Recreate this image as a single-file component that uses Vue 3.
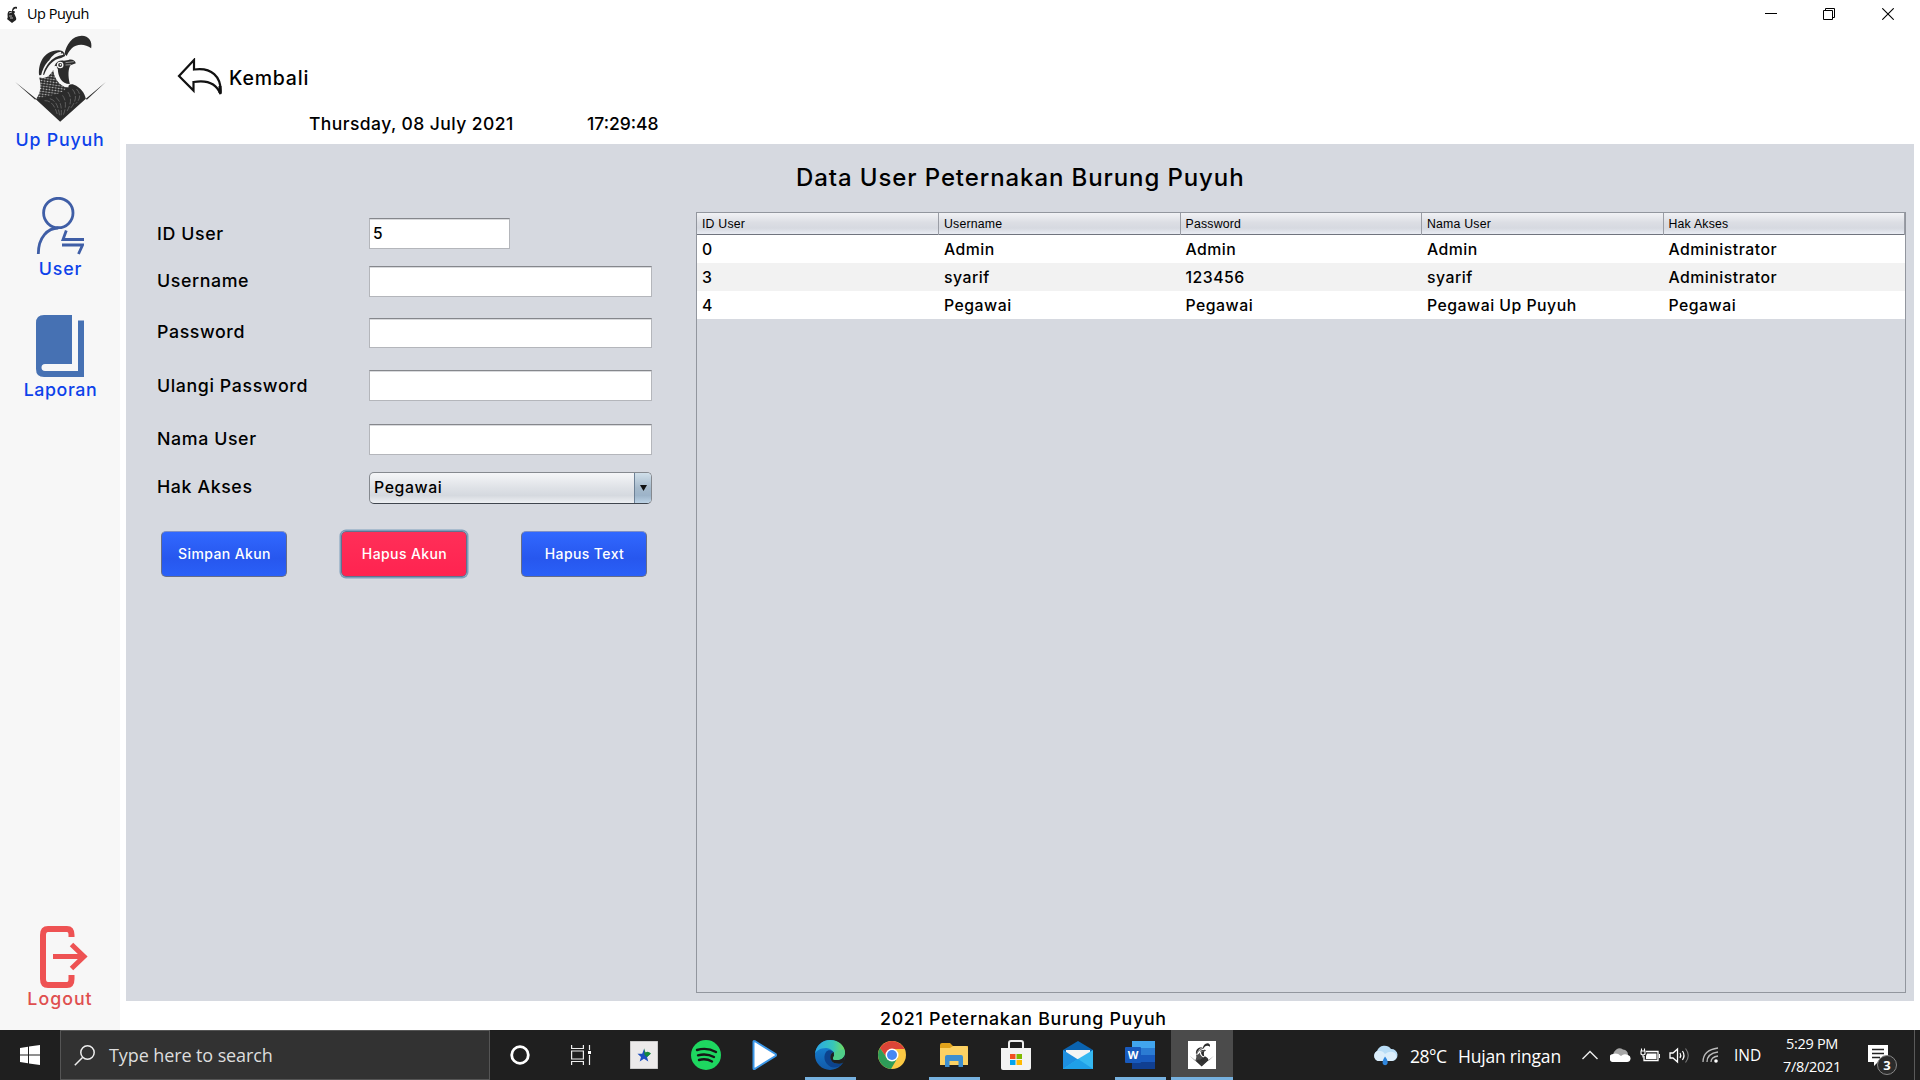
<script setup>
const menu = [
  { id: 'user', label: 'User' },
  { id: 'laporan', label: 'Laporan' },
]

const fields = [
  { id: 'id', label: 'ID User', value: '5' },
  { id: 'username', label: 'Username', value: '' },
  { id: 'password', label: 'Password', value: '' },
  { id: 'ulangi', label: 'Ulangi Password', value: '' },
  { id: 'nama', label: 'Nama User', value: '' },
]

const columns = ['ID User', 'Username', 'Password', 'Nama User', 'Hak Akses']

const users = [
  ['0', 'Admin', 'Admin', 'Admin', 'Administrator'],
  ['3', 'syarif', '123456', 'syarif', 'Administrator'],
  ['4', 'Pegawai', 'Pegawai', 'Pegawai Up Puyuh', 'Pegawai'],
]
</script>

<template>
  <div class="screen">
    <svg class="defs" width="0" height="0" aria-hidden="true">
      <defs>
        <pattern id="feather" width="9" height="8" patternUnits="userSpaceOnUse" patternTransform="rotate(8)">
          <rect width="9" height="8" fill="#2b2b2b" />
          <ellipse cx="4.5" cy="4" rx="2.8" ry="1.9" fill="#c9c9c9" />
        </pattern>
        <symbol id="quail" viewBox="40 100 290 270">
          <path d="M194 160C199 132 217 105 246 105C267 105 278 122 274 143C256 128 229 129 216 143C207 152 203 160 201 166Z" fill="#2b2b2b" />
          <path d="M118 224C114 192 130 150 176 149C190 149 195 158 196 166L184 172C160 175 143 196 133 222Z" fill="#2b2b2b" />
          <path d="M126 226C132 196 152 166 190 160M150 180C160 165 172 157 184 156" fill="none" stroke="#f6f6f6" stroke-width="5" />
          <path d="M118 230C138 236 150 226 160 208C164 235 178 255 206 262L190 286L108 296C121 280 126 258 118 230Z" fill="url(#feather)" />
          <path d="M108 296C140 284 175 285 195 268C203 254 212 248 222 252C242 260 254 275 258 294L181 363Z" fill="#2b2b2b" />
          <path d="M164 196C169 183 180 178 192 180L206 178C216 174 226 180 228 188L212 194C205 204 204 225 210 250C185 250 174 226 174 204Z" fill="#2b2b2b" />
          <path d="M168 196C164 226 180 252 206 257" fill="none" stroke="#f6f6f6" stroke-width="7" />
          <circle cx="181" cy="193" r="8" fill="#2b2b2b" stroke="#f6f6f6" stroke-width="4" />
          <circle cx="182" cy="192" r="2.5" fill="#fff" />
          <path d="M197 186L222 183M197 193L214 192" stroke="#aaa" stroke-width="2.5" />
          <path d="M134 300Q160 298 172 340M150 294Q174 300 179 344M168 290Q188 305 184 344M188 284Q204 305 191 342M204 274Q222 298 200 334M218 266Q238 290 213 322M230 265Q250 286 228 309" fill="none" stroke="#777" stroke-width="2" stroke-dasharray="17 5" />
          <path d="M46 244L109 294L106 297ZM318 244L261 297L258 294Z" fill="#2b2b2b" />
        </symbol>
      </defs>
    </svg>

    <header class="titlebar">
      <svg class="tb-icon" width="12" height="17" preserveAspectRatio="none" viewBox="0 0 12 17">
        <path d="M6 5C6 1 9 0 11 1V3C9 2 8 3 7 5C10 5 9 7 8 7C9 10 11 12 10 14L6 17L1 13C3 11 0 8 3 5Z" fill="#222" />
        <path d="M3 7L6 6M3 10H6M4 12H7" stroke="#ddd" stroke-width=".8" />
      </svg>
      <span class="tb-title">Up Puyuh</span>
      <div class="controls">
        <svg width="12" height="12" viewBox="0 0 12 12"><path d="M0 5.5H12" stroke="#000" /></svg>
        <svg width="12" height="12" viewBox="0 0 12 12"><path d="M.5 2.5H9.500V11.500H.5ZM2.500 2.500V.5H11.500V9.500H9.500" fill="none" stroke="#000" /></svg>
        <svg width="12" height="12" viewBox="0 0 12 12"><path d="M.3.3L11.700 11.700M11.700.3L.3 11.700" stroke="#000" stroke-width="1.100" /></svg>
      </div>
    </header>

    <div class="app">
      <aside class="sidebar">
        <svg class="logo" width="97" height="90"><use href="#quail" /></svg>
        <span class="brand">Up Puyuh</span>
        <a v-for="m in menu" :key="m.id" class="nav" :class="m.id">
          <svg v-if="m.id === 'user'" width="48" height="58" viewBox="0 0 48 58">
            <g fill="none" stroke="#3f5ea6" stroke-width="2.800">
              <circle cx="22.300" cy="16" r="14.700" />
              <path d="M2.300 57C2.300 40 12 31 22.300 31" />
              <path d="M30.300 33.500L27 42.500H48M26 48H46.600L42.500 57" />
            </g>
          </svg>
          <svg v-else width="48" height="62" viewBox="0 0 48 62">
            <path d="M8 0H36V49H9A3.500 3.500 0 0 0 9 56H42V5.500H48V62H8Q0 62 0 54V8Q0 0 8 0Z" fill="#4671b3" />
          </svg>
          <span>{{ m.label }}</span>
        </a>
        <a class="logout">
          <svg width="48" height="62" viewBox="0 0 48 62">
            <path d="M31.500 11V9Q31.500 3 27 3H8Q3 3 3 9V53Q3 59 8 59H27Q31.500 59 31.500 53V49" fill="none" stroke="#ee5253" stroke-width="6" />
            <path d="M13 30.500H44M31.500 18.500L44 30.500L31.500 42.500" fill="none" stroke="#ee5253" stroke-width="5" />
          </svg>
          <span>Logout</span>
        </a>
      </aside>

      <main class="main">
        <div class="top">
          <a class="back">
            <svg width="46" height="38" viewBox="0 0 46 38">
              <path d="M2 18L17 2V11.500C34 9 45 18 43.500 36C39 24.500 28 22 16.500 24V32.500Z" fill="#fff" stroke="#111" stroke-width="2.200" />
              <path d="M43 28V35" stroke="#111" stroke-width="3" />
            </svg>
            <span>Kembali</span>
          </a>
          <div class="clock"><span class="date">Thursday, 08 July 2021</span><span class="time">17:29:48</span></div>
        </div>

        <section class="panel">
          <h1>Data User Peternakan Burung Puyuh</h1>
          <div class="content">
            <form class="form">
              <div v-for="f in fields" :key="f.id" class="row" :class="f.id">
                <label>{{ f.label }}</label>
                <div class="input">{{ f.value }}</div>
              </div>
              <div class="row akses">
                <label>Hak Akses</label>
                <div class="select">
                  <span>Pegawai</span>
                  <i><svg width="7" height="6" viewBox="0 0 7 6"><path d="M0 0H7L3.500 6Z" fill="#111" /></svg></i>
                </div>
              </div>
              <div class="actions">
                <div class="btn simpan">Simpan Akun</div>
                <div class="btn danger">Hapus Akun</div>
                <div class="btn teks">Hapus Text</div>
              </div>
            </form>

            <div class="table">
              <div class="thead"><span v-for="c in columns" :key="c">{{ c }}</span></div>
              <div v-for="u in users" :key="u[0]" class="tr"><span v-for="(v, i) in u" :key="i">{{ v }}</span></div>
            </div>
          </div>
        </section>

        <footer class="foot">2021 Peternakan Burung Puyuh</footer>
      </main>
    </div>

    <div class="taskbar">
      <div class="start">
        <svg width="20" height="20" viewBox="0 0 20 20"><path d="M0 3L8 1.800V9.400H0ZM9 1.600L20 0V9.400H9ZM0 10.400H8V18.200L0 17ZM9 10.400H20V20L9 18.400Z" fill="#fff" /></svg>
      </div>
      <div class="search">
        <svg width="21" height="21" viewBox="0 0 21 21"><circle cx="13.500" cy="7.500" r="6.700" fill="none" stroke="#eee" stroke-width="1.500" /><path d="M8.500 12.500L.8 20.200" stroke="#eee" stroke-width="1.500" /></svg>
        <span>Type here to search</span>
      </div>
      <div class="apps">
        <div class="cell"><svg width="20" height="20"><circle cx="10" cy="10" r="8.300" fill="none" stroke="#fff" stroke-width="2.800" /></svg></div>
        <div class="cell view">
          <svg width="20" height="20" viewBox="0 0 20 20"><path d="M.6 0V3.500H12.400V0M.6 20V16.500H12.400V20M.6 6H12.400V14H.6ZM18.500 0V5M18.500 10V20" fill="none" stroke="#eee" stroke-width="1.200" /><path d="M17 6H20V9H17Z" fill="#fff" /></svg>
        </div>
        <div class="cell">
          <svg width="28" height="28" viewBox="0 0 28 28"><rect width="28" height="28" fill="#eceaea" stroke="#aaa" /><path d="M14 8L15.800 12.800H20.500L17 16L18.300 20.500L14 17.800L9.700 20.500L11 16L7.500 12.800H12.200Z" fill="#1d4fc0" /><path d="M14 7L15.500 11.500Q18 9.500 21 12.500L17 16L14.500 14Z" fill="#138a3a" /></svg>
        </div>
        <div class="cell">
          <svg width="30" height="30" viewBox="0 0 30 30"><circle cx="15" cy="15" r="15" fill="#1ed760" /><path d="M6 10Q16 7 25 12M7 15.300Q15.500 13 23 17M8 20Q15 18 21 21.500" fill="none" stroke="#161616" stroke-width="2.400" stroke-linecap="round" /></svg>
        </div>
        <div class="cell left">
          <svg width="25" height="30" viewBox="0 0 25 30"><path d="M1.500 1.500Q1.500.5 3.500 1.500L23.500 14Q24.500 15 23.500 16L3.500 28.500Q1.500 29.500 1.500 28.500Z" fill="#fff" stroke="#3b97e8" stroke-width="2" /></svg>
        </div>
        <div class="cell open">
          <svg width="30" height="30" viewBox="0 0 30 30">
            <defs>
              <linearGradient id="eg" x1="0" x2="1"><stop offset="0" stop-color="#2aa5e8" /><stop offset=".6" stop-color="#37c6b9" /><stop offset="1" stop-color="#73dc5b" /></linearGradient>
              <linearGradient id="eb" x1="0" x2="0" y2="1"><stop offset="0" stop-color="#1688d8" /><stop offset="1" stop-color="#1259a8" /></linearGradient>
            </defs>
            <circle cx="15" cy="15" r="15" fill="url(#eb)" />
            <path d="M0 14C1 5 8 0 15 0C24 0 30 6 30 12.500C30 18 25 20.500 20 20C17 19.500 18 17.500 19 16C20 12 16 8 11 8C5 8 1 11 0 14Z" fill="url(#eg)" />
            <path d="M11 12C7 18 11 26 18 27.500C22 28 26 26 28 23C24 25 17 24 15.500 19C14.500 15 17 12.500 18.500 12C16 9.500 12.500 10 11 12Z" fill="#0c438e" />
            <path d="M18.800 12C15.500 13 14.500 17 16 20C18 24 25 25 28.300 22.500Q30 21 29.700 19.500L30 13C29 18.500 25 20.500 20 20C17 19.500 18.500 17.500 19 16Z" fill="#202020" />
            <path d="M19 16C18 17.500 17 19.500 20 20C25 20.500 30 18 30 12.500L29 9L20 12Z" fill="#4fce8a" />
          </svg>
        </div>
        <div class="cell">
          <svg width="28" height="28" viewBox="0 0 28 28"><circle cx="14" cy="14" r="14" fill="#fbc843" /><path d="M1.900 7A14 14 0 0 1 26.100 7L26.500 8H14L9 17Z" fill="#dc4437" /><path d="M1.900 7A14 14 0 0 0 13 28L19.500 17L9 17Z" fill="#2e9d58" /><circle cx="14" cy="14" r="6.500" fill="#fff" /><circle cx="14" cy="14" r="5" fill="#4587f3" /></svg>
        </div>
        <div class="cell open">
          <svg width="28" height="24" viewBox="0 0 28 24"><path d="M0 2Q0 0 2 0H10L13 3H28V22H0Z" fill="#e0a21b" /><path d="M0 5H10L13 3H26Q28 3 28 5V22H0Z" fill="#fbd163" /><path d="M5 24V14Q5 12 7 12H21Q23 12 23 14V24H18.500V18H9.500V24Z" fill="#3d8fd0" /></svg>
        </div>
        <div class="cell">
          <svg width="30" height="30" viewBox="0 0 30 30"><path d="M8 9V3Q8 1 10 1H20Q22 1 22 3V9" fill="none" stroke="#eee" stroke-width="2" /><path d="M0 8H30V28Q30 30 28 30H2Q0 30 0 28Z" fill="#f3f3f3" /><path d="M9 14H14.500V19H9Z" fill="#f25022" /><path d="M15.500 14H21V19H15.500Z" fill="#7fba00" /><path d="M9 20H14.500V25H9Z" fill="#00a4ef" /><path d="M15.500 20H21V25H15.500Z" fill="#ffb900" /></svg>
        </div>
        <div class="cell">
          <svg width="30" height="28" viewBox="0 0 30 28"><path d="M0 9L15 0L30 9V15H0Z" fill="#0a63b0" /><path d="M3 9H27V17L15 21L3 17Z" fill="#f4f4f4" /><path d="M0 9L30 28H0Z" fill="#1e8fe0" /><path d="M30 9V28H0L15 18Z" fill="#35b8f1" /><path d="M15 18L30 28H0Z" fill="#1f9fe8" /></svg>
        </div>
        <div class="cell open">
          <svg width="30" height="28" viewBox="0 0 30 28"><path d="M7 0H30V7H7Z" fill="#41a5ee" /><path d="M7 7H30V14H7Z" fill="#2b7cd3" /><path d="M7 14H30V21H7Z" fill="#185abd" /><path d="M7 21H30V28H7Z" fill="#103f91" /><rect y="6" width="16" height="16" rx="1" fill="#185abd" /><text x="8" y="18" text-anchor="middle" fill="#fff" font-family="Open Sans, sans-serif" font-weight="700" font-size="11">W</text></svg>
        </div>
        <div class="cell open active"><div class="tile"><svg width="26" height="26"><use href="#quail" /></svg></div></div>
      </div>

      <div class="tray">
        <svg class="rain" width="26" height="21" viewBox="0 0 26 21"><path d="M6 16A5.500 5.500 0 0 1 5 6A8 8 0 0 1 19 4A6 6 0 0 1 20 16Z" fill="#b9ddf6" /><path d="M6 16A5.500 5.500 0 0 1 5 6Q10 5 13 9Q18 5 23 8Q27 14 20 16Z" fill="#dceefb" /><path d="M13 11.500Q16.500 16 15.500 18.500A2.500 2.500 0 0 1 10.700 18.500Q10 16 13 11.500Z" fill="#2f86dd" /></svg>
        <span class="temp">28°C</span><span class="cond">Hujan ringan</span>
        <svg class="chev" width="16" height="10" viewBox="0 0 16 10"><path d="M.5 9L8 1.500L15.500 9" fill="none" stroke="#eee" stroke-width="1.400" /></svg>
        <svg class="cloud" width="21" height="14" viewBox="0 0 21 14"><path d="M4 9A5 5 0 0 1 4 4Q8-2 13 1.500Q18 2 18 7L12 9Z" fill="#a6a6a6" /><path d="M4 14A4 4 0 0 1 3 6Q7 4.500 11 8Q14 5 18 7Q21 8 20.500 11Q20 14 17 14Z" fill="#fff" /></svg>
        <svg class="batt" width="20" height="14" viewBox="0 0 20 14"><path d="M6 3.500H18V12.500H4V8" fill="none" stroke="#fff" stroke-width="1.300" /><path d="M7 5.500H16.500V11H6V8Z" fill="#fff" /><path d="M19.500 6V10M1 3H5V6Q3 8 1 6ZM1.500 3V.5M4.500 3V.5M3 7V9.500" fill="none" stroke="#fff" stroke-width="1.100" /></svg>
        <svg class="vol" width="21" height="17" viewBox="0 0 21 17"><path d="M1 6H4L8.500 2V15L4 11H1Z" fill="none" stroke="#fff" stroke-width="1.300" /><path d="M11 6Q12.500 8.500 11 11M13.500 4Q16.500 8.500 13.500 13" fill="none" stroke="#fff" stroke-width="1.200" /><path d="M16.500 1.500Q22 8.500 16.500 15.500" fill="none" stroke="#777" stroke-width="1.200" /></svg>
        <svg class="wifi" width="17" height="16" viewBox="0 0 17 16"><path d="M1 15Q1 3 16 1M5 15Q5 6.500 16 5M9 15Q9 10 16 9" fill="none" stroke="#bbb" stroke-width="1.300" /><circle cx="14" cy="14" r="1.800" fill="#fff" /></svg>
        <span class="lang">IND</span>
        <div class="datetime"><span>5:29 PM</span><span>7/8/2021</span></div>
        <div class="notif">
          <svg width="20" height="21" viewBox="0 0 20 21"><path d="M0 0H20V17H10L6 21V17H0Z" fill="#fff" /><path d="M4 4.500H16M4 8.500H16M4 12.500H12" stroke="#222" stroke-width="1.400" /></svg>
          <b>3</b>
        </div>
        <i class="peek"></i>
      </div>
    </div>
  </div>
</template>

<style>
body { margin: 0; overflow: hidden; }
</style>

<style scoped>
* { box-sizing: border-box; }
.screen { width: 1920px; height: 1080px; display: flex; flex-direction: column; background: #fff; font: 500 17.5px/24px Inter, sans-serif; color: #000; overflow: hidden; white-space: nowrap; }
.defs { position: absolute; }
svg { display: block; flex: none; }

.titlebar { height: 29px; flex: none; display: flex; align-items: center; padding: 0 26px 1px 6px; }
.tb-title { margin-left: 9px; font: 400 14.5px/20px "Open Sans", sans-serif; letter-spacing: -.5px; }
.controls { margin-left: auto; display: flex; gap: 47px; }
.controls svg:nth-child(2) { margin-right: 0; margin-left: -1px; }

.app { height: 1001px; flex: none; display: flex; }
.sidebar { width: 120px; background: #f7f7f7; display: flex; flex-direction: column; align-items: center; padding-top: 5px; color: #0d42ea; letter-spacing: .8px; font-size: 17.800px; }
.logo { margin-left: 2px; }
.brand { margin-top: 4px; }
.nav, .logout { display: flex; flex-direction: column; align-items: center; }
.nav.user { margin-top: 45px; }
.nav.user span { margin-top: 2px; margin-left: 1px; }
.nav.laporan { margin-top: 34px; }
.nav.laporan span { margin-top: 1px; margin-left: 1px; letter-spacing: .6px; }
.logout { margin-top: auto; margin-bottom: 19px; color: #df4f4f; letter-spacing: 1px; }
.logout svg { margin-left: 8px; margin-bottom: -1px; }

.main { flex: 1; padding: 0 6px; display: flex; flex-direction: column; }
.top { height: 115px; display: flex; flex-direction: column; }
.back { display: flex; align-items: center; height: 38px; margin: 29px 0 0 51px; font-size: 19.500px; letter-spacing: .8px; }
.back span { margin-left: 6px; margin-top: 1px; }
.clock { display: flex; margin: 16px 0 0 183px; letter-spacing: .43px; }
.date { width: 278px; }
.time { letter-spacing: 0; }
.panel { height: 857px; background: #d6d9e0; }
h1 { margin: 0; padding: 18px 0 0 670px; font: 500 24px/32px Inter, sans-serif; letter-spacing: .9px; }
.content { display: flex; justify-content: space-between; padding: 18px 8px 0 31px; }

.form { width: 500px; padding-top: 6px; letter-spacing: .6px; }
.row { display: flex; align-items: center; height: 31px; }
.row label { width: 212px; font-size: 17.800px; }
.input { width: 283px; height: 31px; background: #fff; border: 1px solid #b4b6bb; border-top-color: #85878c; box-shadow: inset 0 1px #d9dadd; padding-left: 3px; line-height: 29px; font-size: 15.500px; }
.id .input { width: 141px; }
.username { margin-top: 17px; }
.username label { margin-top: -2px; }
.password { margin-top: 21px; height: 30px; }
.password .input { height: 30px; }
.password label, .nama label, .akses label { margin-top: -2px; }
.ulangi { margin-top: 22px; }
.nama { margin-top: 23px; }
.akses { margin-top: 17px; }
.select { width: 283px; height: 32px; border: 1px solid #85898f; border-bottom-color: #40464e; border-radius: 5px; display: flex; background: linear-gradient(#f5f6f8, #dfe2e7 48%, #d5d9df 75%, #eef0f3); overflow: hidden; font-size: 15.800px; line-height: 30px; }
.select span { flex: 1; padding-left: 4px; }
.select i { width: 17px; border-left: 1px solid #6d8196; background: linear-gradient(#d0dfea, #a5b9cb 50%, #9db4c9 75%, #bdd3e6); display: flex; align-items: center; justify-content: center; }
.actions { display: flex; gap: 54px; margin: 28px 0 0 4px; }
.btn { width: 126px; height: 46px; border: 1px solid #666d88; border-top-color: #8090c5; border-radius: 5px; background: linear-gradient(#3168ff, #2757ee 60%, #2a60f8); color: #fff; font-size: 14px; line-height: 44px; text-align: center; letter-spacing: .4px; padding-left: 1px; }
.btn.danger { background: linear-gradient(#ff2f58, #ff2350); border-color: #63718e; box-shadow: 0 0 0 1.500px #7d9fbb; }

.table { width: 1210px; height: 781px; border: 1px solid #92969e; }
.thead, .tr { display: grid; grid-template-columns: 242px repeat(4, 1fr); }
.thead { height: 22px; background: linear-gradient(#f1f2f5, #dcdee4 45%, #d6d9e0 72%, #e9ecf3); border-bottom: 1px solid #70747e; font: 400 12.300px/22px "Liberation Sans", sans-serif; letter-spacing: .2px; }
.thead span { padding-left: 5px; border-right: 1px solid #9a9da5; }
.tr { height: 28px; background: #fff; line-height: 30px; font-size: 15.800px; letter-spacing: .5px; }
.tr span { padding-left: 5px; }
.tr:nth-child(odd) { background: #f2f2f2; }
.foot { height: 29px; line-height: 36px; padding-left: 754px; font-size: 17.800px; letter-spacing: .7px; }

.taskbar { height: 50px; flex: none; display: flex; background: #1f1f1f; color: #fff; font-family: "Open Sans", sans-serif; font-weight: 400; }
.start { width: 60px; display: flex; align-items: center; justify-content: center; }
.search { width: 430px; background: #323232; border: 1px solid #555; display: flex; align-items: center; padding-left: 13px; font-size: 18px; color: #ddd; }
.search span { margin-left: 14px; letter-spacing: -.1px; }
.apps { display: flex; margin-left: -1px; }
.cell { width: 62px; height: 50px; display: flex; align-items: center; justify-content: center; position: relative; }
.cell.left svg { margin-right: 8px; }
.cell.view svg { margin-right: 3px; }
.cell.open::after { content: ""; position: absolute; left: 6px; right: 5px; bottom: 0; height: 3px; background: #76b1df; }
.cell.active { background: #4b4b4b; }
.cell.active::after { left: 0; right: 0; }
.tile { width: 28px; height: 28px; background: #fff; display: flex; align-items: center; justify-content: center; }
.tray { flex: 1; display: flex; align-items: center; padding-left: 139px; font-size: 17.500px; }
.temp { width: 48px; margin-left: 12px; letter-spacing: -.5px; padding-top: 1px; }
.cond { width: 124px; letter-spacing: -.2px; padding-top: 1px; }
.chev { margin-right: 12px; }
.cloud { margin-right: 9px; }
.batt { margin-right: 9px; }
.vol { margin-right: 12px; }
.wifi { margin-right: 15px; }
.lang { width: 49px; font-size: 15.500px; }
.datetime { width: 58px; display: flex; flex-direction: column; align-items: center; font-size: 14.500px; line-height: 23px; letter-spacing: -.3px; }
.notif { position: relative; margin-left: 27px; }
.notif b { position: absolute; left: 9px; top: 10px; width: 20px; height: 20px; border: 1px solid #888; border-radius: 50%; background: #2b2b2b; font-size: 13px; line-height: 18px; text-align: center; }
.peek { width: 1px; height: 50px; background: #5a5a5a; margin-left: auto; margin-right: 5px; }
</style>
